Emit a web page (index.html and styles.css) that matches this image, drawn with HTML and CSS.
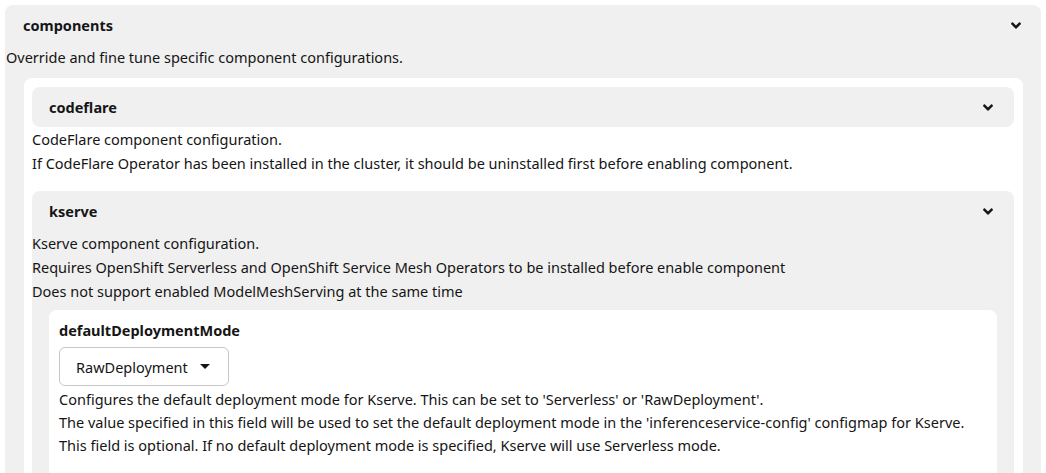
FILE: index.html
```html
<!DOCTYPE html>
<html lang="en">
<head>
<meta charset="utf-8">
<title>components</title>
<link rel="stylesheet" href="styles.css">
</head>
<body>
<section class="group outer">
  <div class="group-head">
    <span class="group-title">components</span>
    <svg class="chev" viewBox="0 152 320 210" width="10" height="7" aria-hidden="true"><path d="M143 352.3L7 216.3c-9.4-9.4-9.4-24.6 0-33.9l22.6-22.6c9.4-9.4 24.6-9.4 33.9 0l96.4 96.4 96.4-96.4c9.4-9.4 24.6-9.4 33.9 0l22.6 22.6c9.4 9.4 9.4 24.6 0 33.9l-136 136c-9.2 9.4-24.4 9.4-33.8 0z"/></svg>
  </div>
  <div class="desc">
    <div class="line">Override and fine tune specific component configurations.</div>
  </div>
  <div class="panel">
    <section class="group sub">
      <div class="group-head">
        <span class="group-title">codeflare</span>
        <svg class="chev" viewBox="0 152 320 210" width="10" height="7" aria-hidden="true"><path d="M143 352.3L7 216.3c-9.4-9.4-9.4-24.6 0-33.9l22.6-22.6c9.4-9.4 24.6-9.4 33.9 0l96.4 96.4 96.4-96.4c9.4-9.4 24.6-9.4 33.9 0l22.6 22.6c9.4 9.4 9.4 24.6 0 33.9l-136 136c-9.2 9.4-24.4 9.4-33.8 0z"/></svg>
      </div>
    </section>
    <div class="desc sub-desc">
      <div class="line">CodeFlare component configuration.</div>
      <div class="line">If CodeFlare Operator has been installed in the cluster, it should be uninstalled first before enabling component.</div>
    </div>
    <section class="group sub kserve">
      <div class="group-head">
        <span class="group-title">kserve</span>
        <svg class="chev" viewBox="0 152 320 210" width="10" height="7" aria-hidden="true"><path d="M143 352.3L7 216.3c-9.4-9.4-9.4-24.6 0-33.9l22.6-22.6c9.4-9.4 24.6-9.4 33.9 0l96.4 96.4 96.4-96.4c9.4-9.4 24.6-9.4 33.9 0l22.6 22.6c9.4 9.4 9.4 24.6 0 33.9l-136 136c-9.2 9.4-24.4 9.4-33.8 0z"/></svg>
      </div>
      <div class="desc">
        <div class="line">Kserve component configuration.</div>
        <div class="line">Requires OpenShift Serverless and OpenShift Service Mesh Operators to be installed before enable component</div>
        <div class="line">Does not support enabled ModelMeshServing at the same time</div>
      </div>
      <div class="card">
        <div class="field-label">defaultDeploymentMode</div>
        <button class="select" type="button">
          <span>RawDeployment</span>
          <svg class="caret" viewBox="0 0 10 5" width="10" height="5" aria-hidden="true"><path d="M0 0h10L5 5z"/></svg>
        </button>
        <div class="field-desc">
          <div class="line">Configures the default deployment mode for Kserve. This can be set to 'Serverless' or 'RawDeployment'.</div>
          <div class="line">The value specified in this field will be used to set the default deployment mode in the 'inferenceservice-config' configmap for Kserve.</div>
          <div class="line">This field is optional. If no default deployment mode is specified, Kserve will use Serverless mode.</div>
        </div>
      </div>
    </section>
  </div>
</section>
</body>
</html>
```
FILE: styles.css
```css
html, body {
  margin: 0;
  background: #ffffff;
}
body {
  box-sizing: border-box;
  height: 473px;
  padding: 5px 5px 0 5px;
  font-family: "Noto Sans", "Open Sans", sans-serif;
  font-size: 14.5px;
  color: #151515;
  overflow: hidden;
  display: flex;
  flex-direction: column;
}
.group {
  background: #f0f0f0;
  border-radius: 8px;
}
.outer {
  flex: 1;
  display: flex;
  flex-direction: column;
  border-bottom-left-radius: 0;
  border-bottom-right-radius: 0;
  min-height: 0;
}
.group-head {
  flex: none;
  height: 40px;
  display: flex;
  align-items: center;
  justify-content: space-between;
  padding: 0 20px 0 18px;
}
.sub .group-head {
  padding: 0 21px 0 17px;
}
.group-title {
  font-weight: 700;
}
.chev {
  fill: #151515;
  display: block;
}
.line {
  height: 24px;
  line-height: 24px;
  white-space: nowrap;
}
.desc {
  flex: none;
  padding-left: 1px;
}
.panel {
  flex: 1;
  min-height: 0;
  display: flex;
  flex-direction: column;
  background: #ffffff;
  border-radius: 8px 8px 0 0;
  margin: 9px 18px 0 19px;
  padding: 9px 9px 0 8px;
}
.sub-desc {
  padding-left: 0;
  margin-bottom: 16px;
}
.kserve {
  flex: 1;
  min-height: 0;
  display: flex;
  flex-direction: column;
  border-radius: 8px 8px 0 0;
}
.kserve .desc {
  padding-left: 0;
}
.card {
  flex: 1;
  min-height: 0;
  background: #ffffff;
  border-radius: 8px 8px 0 0;
  margin: 7px 17px 0 17px;
  padding: 10px 10px 0 10px;
}
.field-label {
  font-weight: 700;
  line-height: 20px;
}
.select {
  margin-top: 7px;
  height: 39px;
  width: 170px;
  box-sizing: border-box;
  border: 1px solid #c7c7c7;
  border-radius: 6px;
  background: #ffffff;
  display: flex;
  align-items: center;
  gap: 12px;
  padding: 0 0 0 16px;
  font: inherit;
  color: inherit;
}
.caret {
  fill: #151515;
  display: block;
}
.field-desc {
  margin-top: 2px;
}
.field-desc .line {
  height: 23px;
  line-height: 23px;
}
```
